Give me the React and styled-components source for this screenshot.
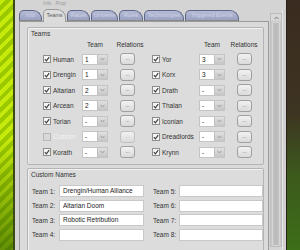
import React from 'react'
import styled, { createGlobalStyle } from 'styled-components'

const Global = createGlobalStyle`
  html, body { margin: 0; padding: 0; }
  body {
    width: 300px;
    height: 250px;
    overflow: hidden;
    font-family: "Liberation Sans", Arial, sans-serif;
  }
`

const Screen = styled.div`
  display: flex;
  width: 300px;
  height: 250px;
  overflow: hidden;
`

const Stripes = styled.div`
  width: 13px;
  flex: none;
  background:
    linear-gradient(180deg, rgba(0,0,0,0) 0%, rgba(0,0,0,0) 55%, rgba(20,70,0,0.55) 100%),
    repeating-linear-gradient(135deg, #c6ea0c 0 4px, #9cc800 4px 8px);
  border-right: 2px solid #3c4a18;
`

const Backdrop = styled.div`
  width: 13px;
  flex: none;
  background: linear-gradient(180deg, #3a2c20 0%, #3e3422 45%, #3c5a1c 70%, #3d6e18 100%);
  border-left: 1px solid #2a2018;
`

const Window = styled.div`
  flex: 1;
  display: flex;
  flex-direction: column;
  background: #d4d4d4;
  min-width: 0;
`

const TitleStrip = styled.div`
  height: 9px;
  font-size: 5px;
  color: #9a9a9a;
  padding-left: 28px;
  line-height: 6px;
`

const Body = styled.div`
  flex: 1;
  display: flex;
  min-height: 0;
`

const Content = styled.div`
  flex: 1;
  display: flex;
  flex-direction: column;
  padding-left: 4px;
  min-width: 0;
`

const TabBar = styled.div`
  display: flex;
  align-items: flex-end;
  height: 14px;
`

const Tab = styled.div`
  height: ${p => (p.$active ? 13 : 11)}px;
  width: ${p => p.$w}px;
  box-sizing: border-box;
  margin-right: 1px;
  border: 1px solid ${p => (p.$active ? '#9a9a9a' : '#5e6688')};
  border-bottom: ${p => (p.$active ? 'none' : '1px solid #8a8a8a')};
  border-radius: 5px 9px 0 0;
  background: ${p => (p.$active ? '#dcdcdc' : 'linear-gradient(180deg, #b6bcd6, #9aa2c2)')};
  color: ${p => (p.$active ? '#5a5a5a' : '#cfd3e6')};
  font-size: 5.5px;
  line-height: ${p => (p.$active ? 11 : 9)}px;
  text-align: center;
  white-space: nowrap;
  overflow: hidden;
  position: relative;
  z-index: ${p => (p.$active ? 2 : 1)};
  margin-bottom: ${p => (p.$active ? -1 : 0)}px;
`

const Panel = styled.div`
  flex: 1;
  border: 1px solid #9a9a9a;
  border-bottom: none;
  background: #dadada;
  padding: 5px 4px 0 7px;
  display: flex;
  flex-direction: column;
  gap: 3px;
`

const Group = styled.div`
  border: 1px solid #b4b4b4;
  border-radius: 2px;
  background: #dcdcdc;
  box-shadow: inset 1px 1px 0 #f0f0f0;
  height: ${p => p.$h}px;
  flex: none;
  box-sizing: border-box;
`

const GroupTitle = styled.div`
  font-size: 6.5px;
  color: #333;
  padding: 2px 0 0 3px;
  height: 9px;
`

const TeamGrid = styled.div`
  display: grid;
  grid-template-columns: 39px 26px 12px 15px 17px 47px 26px 12px 15px;
  grid-template-rows: 10.5px;
  grid-auto-rows: 15.5px;
  padding-left: 15px;
  margin-top: 2px;
  align-items: center;
`

const ColHead = styled.div`
  grid-column: ${p => p.$col} / span ${p => p.$span || 1};
  font-size: 6.5px;
  color: #333;
  text-align: center;
  white-space: nowrap;
  align-self: start;
`

const TeamCell = styled.label`
  display: flex;
  align-items: center;
  gap: 2px;
  font-size: 6.5px;
  color: ${p => (p.$disabled ? '#f4f4f4' : '#333')};
  white-space: nowrap;
`

const Check = styled.span`
  width: 6px;
  height: 6px;
  border: 1px solid ${p => (p.$disabled ? '#b8b8b8' : '#8c8c8c')};
  background: ${p => (p.$disabled ? '#d8d8d8' : '#f6f6f6')};
  display: flex;
  align-items: center;
  justify-content: center;
  flex: none;
`

const Select = styled.div`
  display: flex;
  height: 11px;
  border: 1px solid #c4c4c4;
  box-sizing: border-box;
  background: #fff;
`

const SelectValue = styled.span`
  flex: 1;
  font-size: 6.5px;
  color: #222;
  line-height: 9px;
  padding-left: 2px;
`

const SelectArrow = styled.span`
  width: 9px;
  background: linear-gradient(180deg, #e0e0e0, #c6c6c6);
  border-left: 1px solid #c0c0c0;
  display: flex;
  align-items: center;
  justify-content: center;
`

const DotsButton = styled.div`
  grid-column: ${p => p.$col};
  height: 12px;
  box-sizing: border-box;
  border: 1px solid ${p => (p.$disabled ? '#c0c0c0' : '#a0a0a0')};
  border-radius: 3px;
  background: linear-gradient(180deg, #f2f2f2, #dadada);
  font-size: 5px;
  color: ${p => (p.$disabled ? '#bbb' : '#555')};
  text-align: center;
  line-height: 8px;
`

const NamesGrid = styled.div`
  display: grid;
  grid-template-columns: 27px 85px 9px 26px 84px;
  grid-auto-rows: 14.5px;
  padding-left: 4px;
  margin-top: 4px;
  align-items: center;
`

const NameLabel = styled.div`
  font-size: 6.5px;
  color: #333;
  white-space: nowrap;
  grid-column: ${p => p.$col};
`

const NameInput = styled.div`
  grid-column: ${p => p.$col};
  height: 12px;
  box-sizing: border-box;
  border: 1px solid #c8c8c8;
  background: #fff;
  font-size: 6.5px;
  color: #222;
  line-height: 10px;
  padding-left: 3px;
  white-space: nowrap;
  overflow: hidden;
`

const Scrollbar = styled.div`
  width: 10px;
  flex: none;
  margin: 4px 0 3px 1px;
  border: 1px solid #bcbcbc;
  background: #c9c9c9;
  display: flex;
  flex-direction: column;
`

const ScrollArrow = styled.div`
  height: 7px;
  display: flex;
  align-items: center;
  justify-content: center;
  background: #d8d8d8;
`

const ScrollThumb = styled.div`
  flex: 1;
  margin: 1px 1px 0;
  background: linear-gradient(90deg, #c2c2c2, #b8b8b8 50%, #c4c4c4);
  border: 1px solid #d6d6d6;
  border-radius: 1px;
`

const WindowEdge = styled.div`
  width: 3px;
  flex: none;
  background: #d0d0d0;
  border-left: 1px solid #e6e6e6;
`

const tabs = [
  ['Info', 23],
  ['Teams', 23, true],
  ['Races', 23],
  ['Universe', 27],
  ['Rules', 24],
  ['Technologies', 40],
  ['Triggered Events', 54],
]

const leftTeams = [
  ['Human', '1'],
  ['Drengin', '1'],
  ['Altarian', '2'],
  ['Arcean', '2'],
  ['Torian', '-'],
  ['Custom', '-', true],
  ['Korath', '-'],
]

const rightTeams = [
  ['Yor', '3'],
  ['Korx', '3'],
  ['Drath', '-'],
  ['Thalan', '-'],
  ['Iconian', '-'],
  ['Dreadlords', '-'],
  ['Krynn', '-'],
]

const names = ['Drengin/Human Alliance', 'Altarian Doom', 'Robotic Retribution', '', '', '', '', '']

function CheckMark({ disabled }) {
  if (disabled) return null
  return (
    <svg width="6" height="6" viewBox="0 0 6 6">
      <path d="M0.8 3.2 L2.4 4.8 L5.2 1.2" fill="none" stroke="#3a3a3a" strokeWidth="1.1" />
    </svg>
  )
}

function Arrow() {
  return (
    <svg width="5" height="4" viewBox="0 0 5 4">
      <path d="M0.5 0.8 L2.5 3 L4.5 0.8" fill="none" stroke="#9a9a9a" strokeWidth="1" />
    </svg>
  )
}

function TeamRow({ team, value, disabled, offset }) {
  return (
    <>
      <TeamCell $disabled={disabled} style={{ gridColumn: offset + 1 }}>
        <Check $disabled={disabled}><CheckMark disabled={disabled} /></Check>
        {team}
      </TeamCell>
      <Select style={{ gridColumn: offset + 2 }}>
        <SelectValue>{value}</SelectValue>
        <SelectArrow><Arrow /></SelectArrow>
      </Select>
      <DotsButton $col={offset + 4} $disabled={disabled}>...</DotsButton>
    </>
  )
}

export default function App() {
  return (
    <Screen>
      <Global />
      <Stripes />
      <Window>
        <TitleStrip>Info &nbsp; Prop</TitleStrip>
        <Body>
          <Content>
            <TabBar>
              {tabs.map(([label, w, active]) => (
                <Tab key={label} $w={w} $active={active}>{label}</Tab>
              ))}
            </TabBar>
            <Panel>
              <Group $h={138}>
                <GroupTitle>Teams</GroupTitle>
                <TeamGrid>
                  <ColHead $col={2}>Team</ColHead>
                  <ColHead $col={3} $span={3}>Relations</ColHead>
                  <ColHead $col={7}>Team</ColHead>
                  <ColHead $col={8} $span={3}>Relations</ColHead>
                  {leftTeams.map(([t, v, d], i) => (
                    <React.Fragment key={t}>
                      <TeamRow team={t} value={v} disabled={d} offset={0} />
                      <TeamRow team={rightTeams[i][0]} value={rightTeams[i][1]} offset={5} />
                    </React.Fragment>
                  ))}
                </TeamGrid>
              </Group>
              <Group $h={90}>
                <GroupTitle>Custom Names</GroupTitle>
                <NamesGrid>
                  {[0, 1, 2, 3].map(i => (
                    <React.Fragment key={i}>
                      <NameLabel $col={1}>Team {i + 1}:</NameLabel>
                      <NameInput $col={2}>{names[i]}</NameInput>
                      <NameLabel $col={4}>Team {i + 5}:</NameLabel>
                      <NameInput $col={5}>{names[i + 4]}</NameInput>
                    </React.Fragment>
                  ))}
                </NamesGrid>
              </Group>
            </Panel>
          </Content>
          <Scrollbar>
            <ScrollArrow>
              <svg width="5" height="4" viewBox="0 0 5 4">
                <path d="M0.5 3.2 L2.5 1 L4.5 3.2" fill="none" stroke="#7a7a7a" strokeWidth="1" />
              </svg>
            </ScrollArrow>
            <ScrollThumb />
          </Scrollbar>
          <WindowEdge />
        </Body>
      </Window>
      <Backdrop />
    </Screen>
  )
}
